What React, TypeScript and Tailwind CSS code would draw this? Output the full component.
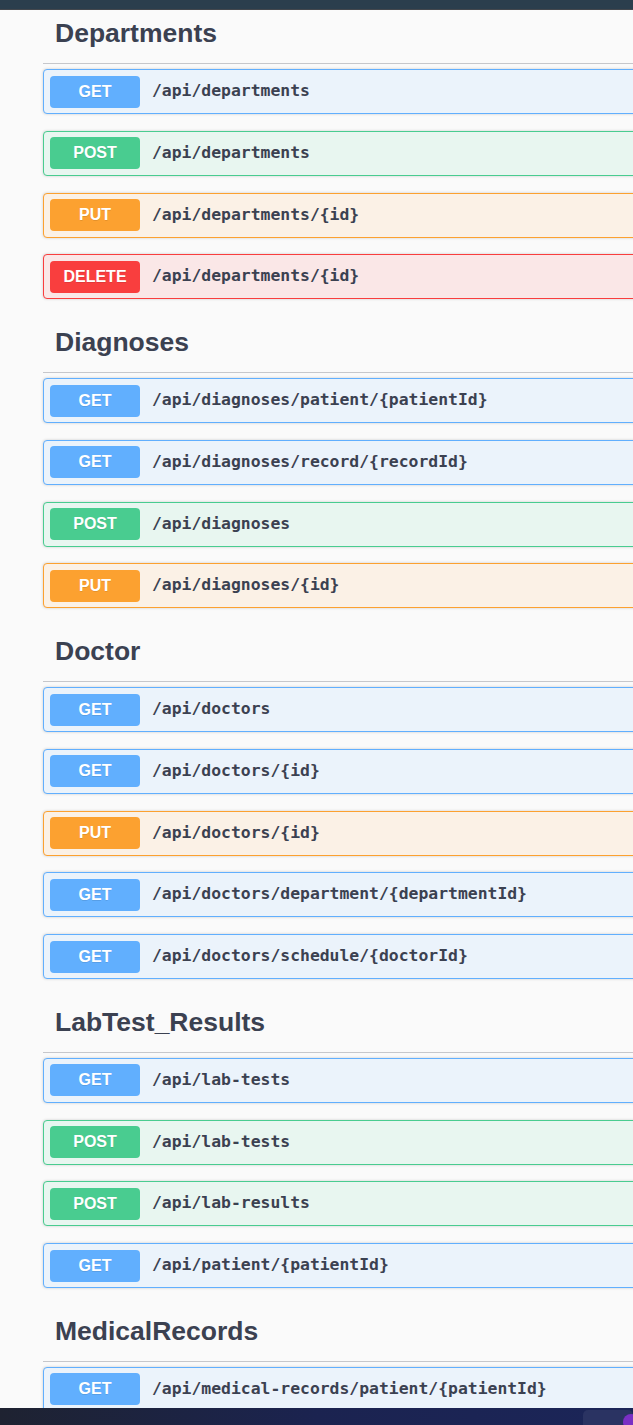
import React from 'react';

type Method = 'GET' | 'POST' | 'PUT' | 'DELETE';

interface Endpoint {
  method: Method;
  path: string;
}

interface Section {
  title: string;
  endpoints: Endpoint[];
}

const sections: Section[] = [
  {
    title: 'Departments',
    endpoints: [
      { method: 'GET', path: '/api/departments' },
      { method: 'POST', path: '/api/departments' },
      { method: 'PUT', path: '/api/departments/{id}' },
      { method: 'DELETE', path: '/api/departments/{id}' },
    ],
  },
  {
    title: 'Diagnoses',
    endpoints: [
      { method: 'GET', path: '/api/diagnoses/patient/{patientId}' },
      { method: 'GET', path: '/api/diagnoses/record/{recordId}' },
      { method: 'POST', path: '/api/diagnoses' },
      { method: 'PUT', path: '/api/diagnoses/{id}' },
    ],
  },
  {
    title: 'Doctor',
    endpoints: [
      { method: 'GET', path: '/api/doctors' },
      { method: 'GET', path: '/api/doctors/{id}' },
      { method: 'PUT', path: '/api/doctors/{id}' },
      { method: 'GET', path: '/api/doctors/department/{departmentId}' },
      { method: 'GET', path: '/api/doctors/schedule/{doctorId}' },
    ],
  },
  {
    title: 'LabTest_Results',
    endpoints: [
      { method: 'GET', path: '/api/lab-tests' },
      { method: 'POST', path: '/api/lab-tests' },
      { method: 'POST', path: '/api/lab-results' },
      { method: 'GET', path: '/api/patient/{patientId}' },
    ],
  },
  {
    title: 'MedicalRecords',
    endpoints: [{ method: 'GET', path: '/api/medical-records/patient/{patientId}' }],
  },
];

// Swagger-like colour sets per HTTP verb
const methodStyles: Record<Method, { block: string; badge: string }> = {
  GET: { block: 'bg-[#ebf3fb] border-[#61affe]', badge: 'bg-[#61affe]' },
  POST: { block: 'bg-[#e8f6f0] border-[#49cc90]', badge: 'bg-[#49cc90]' },
  PUT: { block: 'bg-[#fbf1e6] border-[#fca130]', badge: 'bg-[#fca130]' },
  DELETE: { block: 'bg-[#fae7e7] border-[#f93e3e]', badge: 'bg-[#f93e3e]' },
};

const OpBlock: React.FC<{ endpoint: Endpoint }> = ({ endpoint }) => {
  const s = methodStyles[endpoint.method];
  return (
    <div
      className={`mb-[16.75px] flex h-[45px] items-center rounded-[4px] border pl-[6px] shadow-[0_0_3px_rgba(0,0,0,0.19)] ${s.block}`}
    >
      <div
        className={`flex h-[32px] w-[90px] shrink-0 items-center justify-center rounded-[4px] text-[16px] font-bold text-white [text-shadow:0_1px_0_rgba(0,0,0,0.1)] ${s.badge}`}
        style={{ fontFamily: '"Liberation Sans", Arial, sans-serif' }}
      >
        {endpoint.method}
      </div>
      <span
        className="ml-[12px] whitespace-nowrap text-[16.4px] font-bold text-[#3b4151]"
        style={{ fontFamily: '"DejaVu Sans Mono", "Liberation Mono", monospace' }}
      >
        {endpoint.path}
      </span>
    </div>
  );
};

const SectionBlock: React.FC<{ section: Section; first: boolean }> = ({ section, first }) => (
  <div>
    <div
      className={`mb-[5px] flex items-end border-b border-[#c6c7cb] pb-[15px] pl-[12px] ${first ? 'h-[54px]' : 'h-[57px]'}`}
    >
      <h3
        className="text-[26.5px] font-bold leading-[30px] text-[#3b4151]"
        style={{ fontFamily: '"Liberation Sans", Arial, sans-serif' }}
      >
        {section.title}
      </h3>
    </div>
    {section.endpoints.map((ep, i) => (
      <OpBlock key={i} endpoint={ep} />
    ))}
  </div>
);

export default function App() {
  return (
    <div className="flex h-[1425px] w-[633px] flex-col overflow-hidden bg-[#fafafa]">
      <div className="h-[9px] shrink-0 bg-[#2b3e4d]" />
      <div className="h-[1px] shrink-0 bg-[#43474d]" />
      <div className="min-h-0 flex-1 overflow-hidden">
        <div className="ml-[43px] w-[620px]">
          {sections.map((s, i) => (
            <SectionBlock key={s.title} section={s} first={i === 0} />
          ))}
        </div>
      </div>
      <div className="relative flex h-[17px] shrink-0 items-start bg-gradient-to-r from-[#1e2231] via-[#1b2350] to-[#1b2558]">
        <div className="ml-auto mt-[2px] h-[20px] w-[50px] rounded-[5px] bg-[#2a3362]" />
        <div className="absolute right-[-6px] top-[6px] h-[16px] w-[16px] rounded-full bg-[#7a2fc4]" />
      </div>
    </div>
  );
}
